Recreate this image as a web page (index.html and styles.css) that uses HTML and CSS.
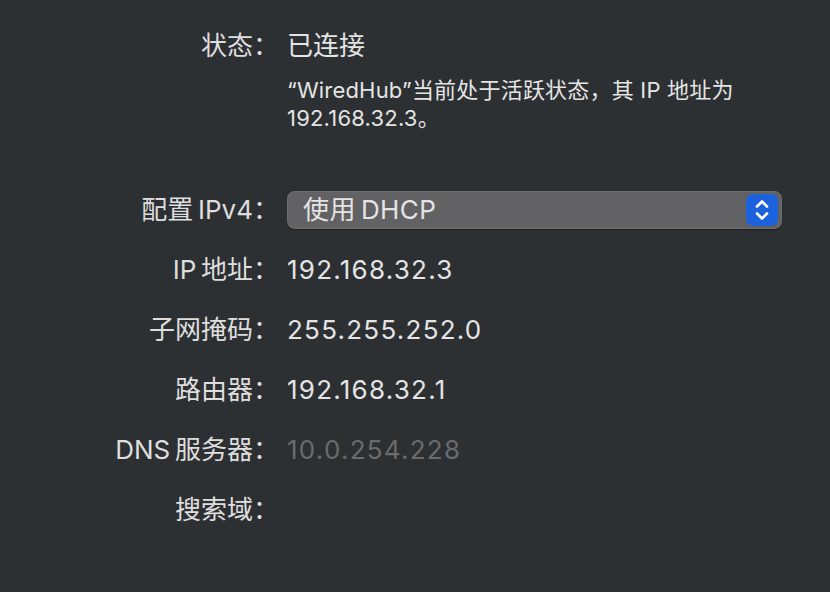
FILE: index.html
```html
<!DOCTYPE html>
<html lang="zh-CN">
<head>
<meta charset="utf-8">
<link rel="stylesheet" href="styles.css">
</head>
<body>
<div class="panel">
  <div class="row status">
    <div class="label">状态：</div>
    <div class="value">已连接</div>
  </div>
  <div class="row desc">
    <div class="label"></div>
    <div class="value">“WiredHub”当前处于活跃状态，其 IP 地址为<br>192.168.32.3。</div>
  </div>
  <div class="row config">
    <div class="label">配置&#8201;IPv4：</div>
    <div class="popup">
      <span class="popup-text">使用&#8201;DHCP</span>
      <span class="stepper">
        <svg width="32" height="32" viewBox="0 0 32 32" fill="none" stroke="#fff" stroke-width="2.6" stroke-linecap="round" stroke-linejoin="round">
          <path d="M11 12.5 L16 7.5 L21 12.5"/>
          <path d="M11 19.5 L16 24.5 L21 19.5"/>
        </svg>
      </span>
    </div>
  </div>
  <div class="row field">
    <div class="label">IP&#8201;地址：</div>
    <div class="value">192.168.32.3</div>
  </div>
  <div class="row field">
    <div class="label">子网掩码：</div>
    <div class="value">255.255.252.0</div>
  </div>
  <div class="row field">
    <div class="label">路由器：</div>
    <div class="value">192.168.32.1</div>
  </div>
  <div class="row field">
    <div class="label">DNS&#8201;服务器：</div>
    <div class="value dim">10.0.254.228</div>
  </div>
  <div class="row field">
    <div class="label">搜索域：</div>
    <div class="value"></div>
  </div>
</div>
</body>
</html>
```
FILE: styles.css
```css
html, body {
  margin: 0;
  padding: 0;
  background: #2d3033;
}
body {
  width: 830px;
  height: 592px;
  overflow: hidden;
  font-family: "Inter", "Noto Sans CJK SC", sans-serif;
  color: #e0e0e0;
}
.panel {
  display: flex;
  flex-direction: column;
  padding-top: 30px;
}
.row {
  display: flex;
  align-items: center;
  gap: 8px;
  height: 32px;
}
.label {
  width: 279px;
  flex: none;
  text-align: right;
  font-size: 26px;
  line-height: 32px;
  color: #dedede;
}
.value {
  font-size: 26px;
  line-height: 32px;
  color: #e4e4e4;
}
.desc {
  margin-top: 14px;
  height: 56px;
}
.desc .value {
  font-size: 22px;
  line-height: 28px;
  letter-spacing: 0.2px;
}
.config {
  margin-top: 59px;
  height: 38px;
}
.field {
  margin-top: 28px;
}
.config + .field {
  margin-top: 25px;
}
.field .value {
  letter-spacing: 1.25px;
}
.dim {
  color: #696b6d;
}
.popup {
  width: 495px;
  height: 38px;
  box-sizing: border-box;
  border-radius: 8px;
  background: #626264;
  border: 1px solid rgba(255, 255, 255, 0.08);
  box-shadow: 0 1px 1px rgba(0, 0, 0, 0.35);
  display: flex;
  align-items: center;
  justify-content: space-between;
  padding: 0 3px 0 15px;
}
.popup-text {
  font-size: 26px;
  line-height: 32px;
  color: #e4e4e4;
  letter-spacing: 0.4px;
}
.stepper {
  width: 32px;
  height: 32px;
  border-radius: 7px;
  background: #1c62dc;
  display: flex;
}
```
